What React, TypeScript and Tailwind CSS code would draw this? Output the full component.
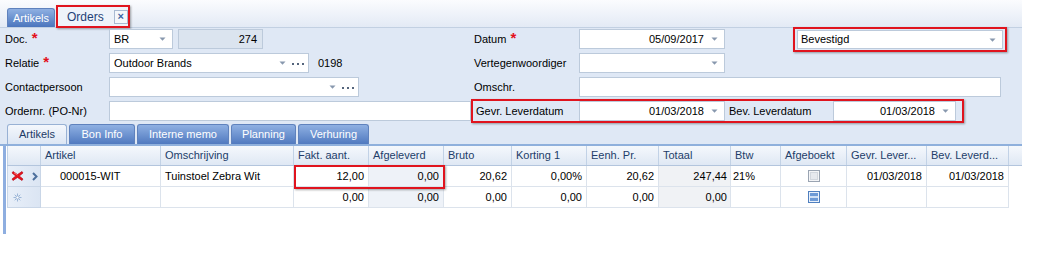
import React from "react";

const Arrow = () => (
  <svg width="7" height="4" viewBox="0 0 7 4" className="shrink-0">
    <path d="M0.5 0.5h6L3.5 3.8z" fill="#8898ae" />
  </svg>
);

const Dots = () => (
  <svg width="12" height="3" viewBox="0 0 12 3" className="shrink-0">
    <rect x="0" y="1" width="2" height="2" fill="#55657c" />
    <rect x="5" y="1" width="2" height="2" fill="#55657c" />
    <rect x="10" y="1" width="2" height="2" fill="#55657c" />
  </svg>
);

const Star = () => (
  <span className="text-[#e3101b] font-bold text-[15px] leading-none ml-[4px] self-start mt-[1px]">*</span>
);

function Label({ children, star, className }: { children: React.ReactNode; star?: boolean; className: string }) {
  return (
    <div className={"flex items-center h-full shrink-0 " + className}>
      <span>{children}</span>
      {star ? <Star /> : null}
    </div>
  );
}

function Input({ className, children }: { className: string; children?: React.ReactNode }) {
  return (
    <div className={"h-full bg-white border border-[#bccadb] flex items-center shrink-0 " + className}>{children}</div>
  );
}

const RedX = () => (
  <svg width="13" height="12" viewBox="0 0 13 12">
    <path d="M2 1.5 L6.5 4.5 L11 1.5 L12 3 L8.3 6 L12 9 L11 10.5 L6.5 7.5 L2 10.5 L1 9 L4.7 6 L1 3 Z" fill="#e8121c" stroke="#b00010" strokeWidth="0.6" />
    <path d="M3 2.8 L6.5 5" stroke="#ff8a8a" strokeWidth="0.8" />
  </svg>
);

const Chevron = () => (
  <svg width="6" height="9" viewBox="0 0 6 9">
    <path d="M1 1 L4.5 4.5 L1 8" stroke="#4d6f9c" strokeWidth="2" fill="none" />
  </svg>
);

const NewRow = () => (
  <svg width="9" height="9" viewBox="0 0 9 9">
    <g stroke="#9cb6d8" strokeWidth="1">
      <path d="M4.5 0.5v8" />
      <path d="M0.5 4.5h8" />
      <path d="M1.7 1.7l5.6 5.6" />
      <path d="M7.3 1.7l-5.6 5.6" />
    </g>
    <circle cx="4.5" cy="4.5" r="1.6" fill="#ffffff" stroke="#9cb6d8" />
  </svg>
);

const CheckEmpty = () => (
  <svg width="12" height="12" viewBox="0 0 12 12">
    <rect x="0.5" y="0.5" width="11" height="11" fill="#f4f5f7" stroke="#9aa4b2" />
    <rect x="2.5" y="2.5" width="7" height="7" fill="#e6e9ee" stroke="#d2d7de" />
  </svg>
);

const CheckBlue = () => (
  <svg width="12" height="12" viewBox="0 0 12 12">
    <rect x="0.5" y="0.5" width="11" height="11" fill="#e9f1fb" stroke="#4f7fbf" />
    <rect x="2" y="2" width="8" height="8" fill="#6d9ad6" />
    <rect x="2" y="5" width="8" height="2" fill="#cfe0f5" />
  </svg>
);

const cols = "grid grid-cols-[34px_120px_133px_75px_75px_68px_75px_72px_72px_50px_66px_80px_82px_12px]";

const headers = [
  "",
  "Artikel",
  "Omschrijving",
  "Fakt. aant.",
  "Afgeleverd",
  "Bruto",
  "Korting 1",
  "Eenh. Pr.",
  "Totaal",
  "Btw",
  "Afgeboekt",
  "Gevr. Lever...",
  "Bev. Leverd...",
];

export default function App() {
  return (
    <div className="w-[1040px] h-[256px] bg-white text-[11px] text-black overflow-hidden" style={{ fontFamily: '"Liberation Sans", Arial, sans-serif' }}>
      {/* top document tabs */}
      <div className="w-[1022px] h-[28px] flex items-end pl-[7px] bg-gradient-to-b from-[#fbfcfe] to-[#e3eaf5] border-b border-[#c2d0e2]">
        <div className="h-[19px] w-[48px] rounded-t-[3px] bg-gradient-to-b from-[#8fb0e2] to-[#4b75bd] border border-[#5f82bd] border-b-0 text-white flex items-center justify-center">
          Artikels
        </div>
        <div className="ml-[1px] border-2 border-[#e0141e] shadow-[1px_1px_2px_rgba(0,0,0,0.35)] -mb-[1px]">
          <div className="h-[19px] w-[70px] bg-[#eef3fa] flex items-center pl-[9px] gap-[10px] text-[#1e3f78] text-[12px]">
            <span>Orders</span>
            <span className="w-[14px] h-[14px] border border-[#a9bad2] bg-[#f4f7fb] flex items-center justify-center text-[#3b63a3] text-[11px] font-bold leading-none">×</span>
          </div>
        </div>
      </div>

      {/* form panel */}
      <div className="w-[1022px] bg-[#dfe8f5] pt-[1px]">
        <div className="flex flex-col gap-[4px] pl-[5px]">
          {/* row 1 */}
          <div className="flex h-[20px] items-center">
            <Label className="w-[104px]" star>Doc.</Label>
            <Input className="w-[64px] pl-[4px] pr-[6px] justify-between">
              <span>BR</span>
              <Arrow />
            </Input>
            <div className="ml-[5px] w-[85px] h-full bg-[#dbe4ef] border border-[#bccadb] flex items-center justify-end pr-[5px]">274</div>
            <div className="w-[211px] shrink-0" />
            <Label className="w-[105px]" star>Datum</Label>
            <Input className="w-[146px] pr-[6px] justify-end gap-[7px]">
              <span>05/09/2017</span>
              <Arrow />
            </Input>
            <div className="ml-[68px] -mt-[2px] -mb-[3px] border-2 border-[#e0141e] px-[2px] py-[1px] shadow-[1px_1px_2px_rgba(0,0,0,0.35)]">
              <Input className="w-[206px] h-[19px] pl-[3px] pr-[6px] justify-between">
                <span>Bevestigd</span>
                <Arrow />
              </Input>
            </div>
          </div>

          {/* row 2 */}
          <div className="flex h-[20px] items-center">
            <Label className="w-[104px]" star>Relatie</Label>
            <Input className="w-[200px] pl-[4px] pr-[4px] justify-between">
              <span>Outdoor Brands</span>
              <span className="flex items-center gap-[6px]">
                <Arrow />
                <Dots />
              </span>
            </Input>
            <span className="ml-[9px] w-[156px] shrink-0">0198</span>
            <Label className="w-[105px]">Vertegenwoordiger</Label>
            <Input className="w-[146px] pr-[6px] justify-end">
              <Arrow />
            </Input>
          </div>

          {/* row 3 */}
          <div className="flex h-[20px] items-center">
            <Label className="w-[104px]">Contactpersoon</Label>
            <Input className="w-[250px] pr-[4px] justify-end gap-[6px]">
              <Arrow />
              <Dots />
            </Input>
            <div className="w-[115px] shrink-0" />
            <Label className="w-[105px]">Omschr.</Label>
            <Input className="w-[422px]" />
          </div>

          {/* row 4 */}
          <div className="flex h-[20px] items-center">
            <Label className="w-[104px]">Ordernr. (PO-Nr)</Label>
            <Input className="w-[362px]" />
            <div className="-my-[2px] border-2 border-[#e0141e] flex items-center h-[24px] pl-[3px] pr-[6px] shadow-[1px_1px_2px_rgba(0,0,0,0.35)]">
              <Label className="w-[103px]">Gevr. Leverdatum</Label>
              <Input className="w-[146px] h-[20px] pr-[6px] justify-end gap-[7px]">
                <span>01/03/2018</span>
                <Arrow />
              </Input>
              <Label className="w-[104px] ml-[4px]">Bev. Leverdatum</Label>
              <Input className="w-[123px] h-[20px] pr-[6px] justify-end gap-[7px]">
                <span>01/03/2018</span>
                <Arrow />
              </Input>
            </div>
          </div>
        </div>

        {/* sub tabs */}
        <div className="mt-[4px] flex items-end pl-[7px] gap-[2px] h-[21px] border-b-2 border-[#8fb0dc]">
          <div className="h-[20px] w-[60px] rounded-t-[3px] bg-gradient-to-b from-[#f4f7fc] to-[#dce6f4] border border-[#98b1d4] border-b-0 text-[#1e3a66] flex items-center justify-center">Artikels</div>
          <div className="h-[20px] w-[66px] rounded-t-[3px] bg-gradient-to-b from-[#8fb0e2] to-[#5079bf] border border-[#5f82bd] border-b-0 text-white flex items-center justify-center">Bon Info</div>
          <div className="h-[20px] w-[92px] rounded-t-[3px] bg-gradient-to-b from-[#8fb0e2] to-[#5079bf] border border-[#5f82bd] border-b-0 text-white flex items-center justify-center">Interne memo</div>
          <div className="h-[20px] w-[65px] rounded-t-[3px] bg-gradient-to-b from-[#8fb0e2] to-[#5079bf] border border-[#5f82bd] border-b-0 text-white flex items-center justify-center">Planning</div>
          <div className="h-[20px] w-[71px] rounded-t-[3px] bg-gradient-to-b from-[#8fb0e2] to-[#5079bf] border border-[#5f82bd] border-b-0 text-white flex items-center justify-center">Verhuring</div>
        </div>
      </div>

      {/* grid area */}
      <div className="w-[1022px] flex h-[88px]">
        <div className="w-[3px] shrink-0 bg-white" />
        <div className="w-[3px] shrink-0 bg-[#8eaee0]" />
        <div className="w-[1px] shrink-0 bg-white" />
        <div className="relative flex-1">
          <div className={cols + " h-[20px] bg-gradient-to-b from-[#f5f8fc] to-[#dfe8f4] border-b border-[#b3c5dd] text-[#223d69]"}>
            {headers.map((h, i) => (
              <div key={i} className={"flex items-center pl-[4px] whitespace-nowrap overflow-hidden border-r border-[#c2d2e6] " + (i === 0 ? "border-l border-l-[#c2d2e6]" : "")}>
                {h}
              </div>
            ))}
            <div />
          </div>

          {/* row 1 */}
          <div className={cols + " h-[21px]"}>
            <div className="flex items-center gap-[8px] pl-[3px] bg-gradient-to-r from-[#e8eff9] to-[#dbe5f3] border-r border-b border-l border-[#c9d6e7]">
              <RedX />
              <Chevron />
            </div>
            <div className="flex items-center pl-[19px] border-r border-b border-[#dce3ec]">000015-WIT</div>
            <div className="flex items-center pl-[4px] border-r border-b border-[#dce3ec]">Tuinstoel Zebra Wit</div>
            <div className="flex items-center justify-end pr-[4px] border-r border-b border-[#dce3ec]">12,00</div>
            <div className="flex items-center justify-end pr-[4px] border-r border-b border-[#dce3ec] bg-[#eef2f8]">0,00</div>
            <div className="flex items-center justify-end pr-[4px] border-r border-b border-[#dce3ec]">20,62</div>
            <div className="flex items-center justify-end pr-[4px] border-r border-b border-[#dce3ec]">0,00%</div>
            <div className="flex items-center justify-end pr-[4px] border-r border-b border-[#dce3ec]">20,62</div>
            <div className="flex items-center justify-end pr-[3px] border-r border-b border-[#dce3ec] bg-[#f0f2f5]">247,44</div>
            <div className="flex items-center pl-[2px] border-r border-b border-[#dce3ec]">21%</div>
            <div className="flex items-center justify-center border-r border-b border-[#dce3ec]"><CheckEmpty /></div>
            <div className="flex items-center justify-end pr-[4px] border-r border-b border-[#dce3ec]">01/03/2018</div>
            <div className="flex items-center justify-end pr-[4px] border-r border-b border-[#dce3ec]">01/03/2018</div>
            <div />
          </div>

          {/* row 2 */}
          <div className={cols + " h-[21px]"}>
            <div className="flex items-center pl-[5px] bg-gradient-to-r from-[#e8eff9] to-[#dbe5f3] border-r border-b border-l border-[#c9d6e7]">
              <NewRow />
            </div>
            <div className="border-r border-b border-[#dce3ec]" />
            <div className="border-r border-b border-[#dce3ec]" />
            <div className="flex items-center justify-end pr-[4px] border-r border-b border-[#dce3ec]">0,00</div>
            <div className="flex items-center justify-end pr-[4px] border-r border-b border-[#dce3ec] bg-[#eef2f8]">0,00</div>
            <div className="flex items-center justify-end pr-[4px] border-r border-b border-[#dce3ec]">0,00</div>
            <div className="flex items-center justify-end pr-[4px] border-r border-b border-[#dce3ec]">0,00</div>
            <div className="flex items-center justify-end pr-[4px] border-r border-b border-[#dce3ec]">0,00</div>
            <div className="flex items-center justify-end pr-[3px] border-r border-b border-[#dce3ec] bg-[#f0f2f5]">0,00</div>
            <div className="border-r border-b border-[#dce3ec]" />
            <div className="flex items-center justify-center border-r border-b border-[#dce3ec]"><CheckBlue /></div>
            <div className="border-r border-b border-[#dce3ec]" />
            <div className="border-r border-b border-[#dce3ec]" />
            <div />
          </div>

          {/* highlight overlay */}
          <div className="absolute left-[287px] top-[19px] w-[151px] h-[24px] border-2 border-[#e0141e] shadow-[1px_1px_2px_rgba(0,0,0,0.35)] pointer-events-none" />
        </div>
      </div>
    </div>
  );
}
